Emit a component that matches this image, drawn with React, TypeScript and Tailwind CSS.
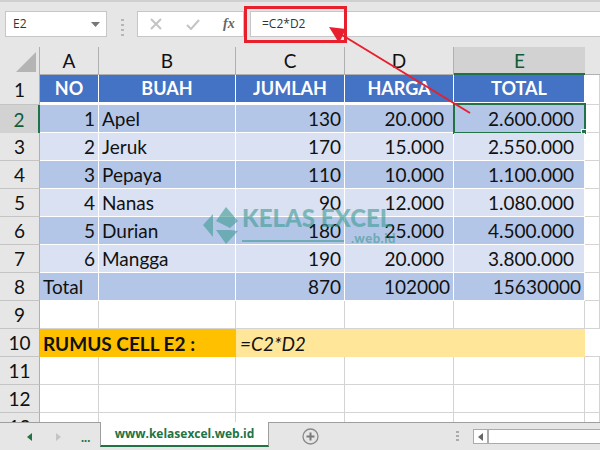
const COLS = ['A', 'B', 'C', 'D', 'E'];

const DATA = [
  ['1', 'Apel', '130', '20.000', '2.600.000'],
  ['2', 'Jeruk', '170', '15.000', '2.550.000'],
  ['3', 'Pepaya', '110', '10.000', '1.100.000'],
  ['4', 'Nanas', '90', '12.000', '1.080.000'],
  ['5', 'Durian', '180', '25.000', '4.500.000'],
  ['6', 'Mangga', '190', '20.000', '3.800.000'],
];

const GRID = 'grid grid-cols-[40px_59px_137px_109px_109px_131px_15px]';
const ROW = 'border-r border-[#b0b0b0] bg-[#e6e6e6] flex items-center justify-center font-normal text-[19px] text-[#111]';

const RowHead = ({ n, active }: { n: number; active?: boolean }) => (
  <div className={active ? 'flex items-center justify-center border-r-2 border-[#217346] bg-[#d2d2d2] text-[#0f5c36]' : ROW + ' border-b border-b-[#c4c4c4]'}>
    {n}
  </div>
);

const Empty = ({ n }: { n: number }) => (
  <div className={GRID + ' h-[28px]'}>
    <RowHead n={n} />
    {[0, 1, 2, 3, 4, 5].map((i) => (
      <div key={i} className="border-r border-b border-[#d4d4d4]" />
    ))}
  </div>
);

export default function App() {
  return (
    <div className="relative flex h-[450px] w-[600px] flex-col overflow-hidden bg-white font-['Lato',sans-serif] text-[19px] leading-none text-[#111]">
      {/* formula bar */}
      <div className="flex h-[47px] shrink-0 items-start border-t-2 border-[#d0d0d0] bg-[#e6e6e6] pt-[9px] font-['Open_Sans',sans-serif] text-[12px] text-[#333]">
        <div className="ml-[5px] flex h-[26px] w-[102px] items-center justify-between border border-[#c6c6c6] bg-white pl-[7px] pr-[6px]">
          <span>E2</span>
          <svg width="9" height="5" viewBox="0 0 9 5"><path d="M0 0h9L4.500 5z" fill="#777" /></svg>
        </div>
        <div className="ml-[14px] mt-[8px] flex w-[3px] flex-col gap-[3px]">
          <div className="h-[2px] w-[3px] bg-[#b5b5b5]" />
          <div className="h-[2px] w-[3px] bg-[#b5b5b5]" />
          <div className="h-[2px] w-[3px] bg-[#b5b5b5]" />
          <div className="h-[2px] w-[3px] bg-[#b5b5b5]" />
        </div>
        <div className="ml-[13px] flex h-[26px] w-[107px] items-center border border-[#c6c6c6] bg-white pl-[12px]">
          <svg width="12" height="12" viewBox="0 0 12 12"><path d="M1 1l10 10M11 1L1 11" stroke="#c4c4c4" strokeWidth="2" fill="none" /></svg>
          <svg className="ml-[24px]" width="14" height="11" viewBox="0 0 14 11"><path d="M1 6l4 4 8-9" stroke="#c4c4c4" strokeWidth="2" fill="none" /></svg>
          <span className="ml-[23px] font-['Liberation_Serif',serif] text-[14px] font-bold italic text-[#666]">fx</span>
        </div>
        <div className="ml-[6px] flex h-[26px] flex-1 items-center border-y border-l border-[#c6c6c6] bg-white pl-[11px]">=C2*D2</div>
      </div>

      {/* sheet */}
      <div className="min-h-0 flex-1 overflow-hidden">
        <div className={GRID + ' h-[28px]'}>
          <div className="flex items-end justify-end border-r border-[#b0b0b0] bg-[#e6e6e6] pb-[3px] pr-[3px]">
            <svg width="20" height="20" viewBox="0 0 20 20"><path d="M20 0v20H0z" fill="#b4b4b4" /></svg>
          </div>
          {COLS.map((c) => (
            <div
              key={c}
              className={
                c === 'E'
                  ? 'flex items-center justify-center border-b-2 border-[#217346] bg-[#d2d2d2] text-[#0f5c36]'
                  : 'flex items-center justify-center border-r border-b border-[#b0b0b0] bg-[#e6e6e6]'
              }
            >
              {c}
            </div>
          ))}
          <div className="border-b border-[#b0b0b0] bg-[#e6e6e6]" />
        </div>

        <div className={GRID + ' h-[30px] text-[18px] font-bold text-white'}>
          <RowHead n={1} />
          {['NO', 'BUAH', 'JUMLAH', 'HARGA', 'TOTAL'].map((h) => (
            <div key={h} className="flex items-center justify-center border-r border-b-[3px] border-white bg-[#4472c4] pb-[1px]">
              {h}
            </div>
          ))}
          <div className="border-r border-b border-[#d4d4d4] bg-white" />
        </div>

        {DATA.map((r, i) => {
          const band = i % 2 === 0 ? 'bg-[#b4c6e7]' : 'bg-[#d9e1f2]';
          return (
            <div key={r[0]} className={GRID + ' h-[28px]'}>
              <RowHead n={i + 2} active={i === 0} />
              <div className={'flex items-center justify-end border-r border-b border-white pr-[3px] ' + band}>{r[0]}</div>
              <div className={'flex items-center border-r border-b border-white pl-[3px] ' + band}>{r[1]}</div>
              <div className={'flex items-center justify-end border-r border-b border-white pr-[3px] ' + band}>{r[2]}</div>
              <div className={'flex items-center justify-end border-r border-b border-white pr-[9px] ' + band}>{r[3]}</div>
              <div className={'relative flex items-center justify-end border-r border-b border-white pr-[10px] ' + band}>
                {r[4]}
                {i === 0 && (
                  <>
                    <div className="absolute -left-[1px] -top-[2px] h-[31px] w-[133px] border-2 border-[#217346]" />
                    <div className="absolute -bottom-[3px] -right-[3px] h-[6px] w-[6px] border border-white bg-[#217346]" />
                  </>
                )}
              </div>
              <div className="border-r border-b border-[#d4d4d4]" />
            </div>
          );
        })}

        <div className={GRID + ' h-[28px]'}>
          <RowHead n={8} />
          <div className="flex items-center border-r border-b border-white bg-[#b4c6e7] pl-[3px]">Total</div>
          <div className="border-r border-b border-white bg-[#b4c6e7]" />
          <div className="flex items-center justify-end border-r border-b border-white bg-[#b4c6e7] pr-[3px]">870</div>
          <div className="flex items-center justify-end border-r border-b border-white bg-[#b4c6e7] pr-[3px]">102000</div>
          <div className="flex items-center justify-end border-r border-b border-white bg-[#b4c6e7] pr-[3px]">15630000</div>
          <div className="border-r border-b border-[#d4d4d4]" />
        </div>

        <Empty n={9} />

        <div className={GRID + ' h-[28px]'}>
          <RowHead n={10} />
          <div className="col-span-2 flex items-center bg-[#ffc000] pl-[3px] font-bold">RUMUS CELL E2 :</div>
          <div className="col-span-3 flex items-center bg-[#ffe699] pl-[4px] italic">=C2*D2</div>
          <div className="border-b border-[#d4d4d4]" />
        </div>

        <Empty n={11} />
        <Empty n={12} />
        <Empty n={13} />
      </div>

      {/* sheet tabs */}
      <div className="flex h-[28px] shrink-0 items-start border-t border-[#9e9e9e] bg-[#e6e6e6]">
        <div className="ml-[27px] mt-[10px]">
          <svg width="5" height="8" viewBox="0 0 5 8"><path d="M5 0v8L0 4z" fill="#217346" /></svg>
        </div>
        <div className="ml-[24px] mt-[10px]">
          <svg width="5" height="8" viewBox="0 0 5 8"><path d="M0 0v8l5-4z" fill="#c4c4c4" /></svg>
        </div>
        <div className="ml-[20px] mt-[8px] w-[12px] text-[13px] font-bold leading-none text-[#217346]">...</div>
        <div className="relative -top-[1px] ml-[7px] flex h-[25px] w-[169px] items-center justify-center border-x border-b-2 border-x-[#9e9e9e] border-b-[#217346] bg-white font-['Open_Sans',sans-serif] text-[12px] font-bold text-[#217346]">
          www.kelasexcel.web.id
        </div>
        <div className="ml-[33px] mt-[5px]">
          <svg width="17" height="17" viewBox="0 0 17 17"><circle cx="8.500" cy="8.500" r="7.500" fill="none" stroke="#8a8a8a" strokeWidth="1.300" /><path d="M8.500 4.500v8M4.500 8.500h8" stroke="#7a7a7a" strokeWidth="2" /></svg>
        </div>
        <div className="ml-[137px] mt-[8px] flex w-[3px] flex-col gap-[2px]">
          <div className="h-[2px] w-[3px] bg-[#ababab]" />
          <div className="h-[2px] w-[3px] bg-[#ababab]" />
          <div className="h-[2px] w-[3px] bg-[#ababab]" />
        </div>
        <div className="ml-[14px] mt-[6px] flex h-[15px] flex-1 items-center border border-r-0 border-[#ababab] bg-white">
          <div className="flex h-full w-[15px] items-center justify-center border-r-2 border-[#ababab]">
            <svg width="5" height="8" viewBox="0 0 5 8"><path d="M5 0v8L0 4z" fill="#666" /></svg>
          </div>
        </div>
      </div>

      {/* watermark */}
      <div className="pointer-events-none absolute left-[203px] top-[207px] flex text-[#3f9a94] opacity-60">
        <svg width="36" height="37" viewBox="0 0 36 37">
          <path d="M0 18L10 7v23zM13 14L23 0l12 14-8 7zM13 23h14l8 1-12 13z" fill="#3f9a94" />
        </svg>
        <div className="ml-[3px] w-[160px]">
          <div className="whitespace-nowrap text-[24px] font-black leading-[22px]">KELAS EXCEL</div>
          <div className="mt-[3px] flex items-start">
            <div className="mt-[8px] h-[2px] w-[102px] bg-[#3f9a94]" />
            <div className="ml-[7px] whitespace-nowrap text-[13px] font-black leading-none tracking-[0.5px]">.web.id</div>
          </div>
        </div>
      </div>

      {/* highlight */}
      <div className="pointer-events-none absolute left-[244px] top-[6px] h-[37px] w-[103px] border-[3px] border-[#e8202e]" />
      <svg className="pointer-events-none absolute left-0 top-0" width="600" height="450">
        <path d="M470 113L342 35" stroke="#e8202e" strokeWidth="2" fill="none" />
        <path d="M329 27L346 29 339 43z" fill="#e8202e" />
      </svg>
    </div>
  );
}
